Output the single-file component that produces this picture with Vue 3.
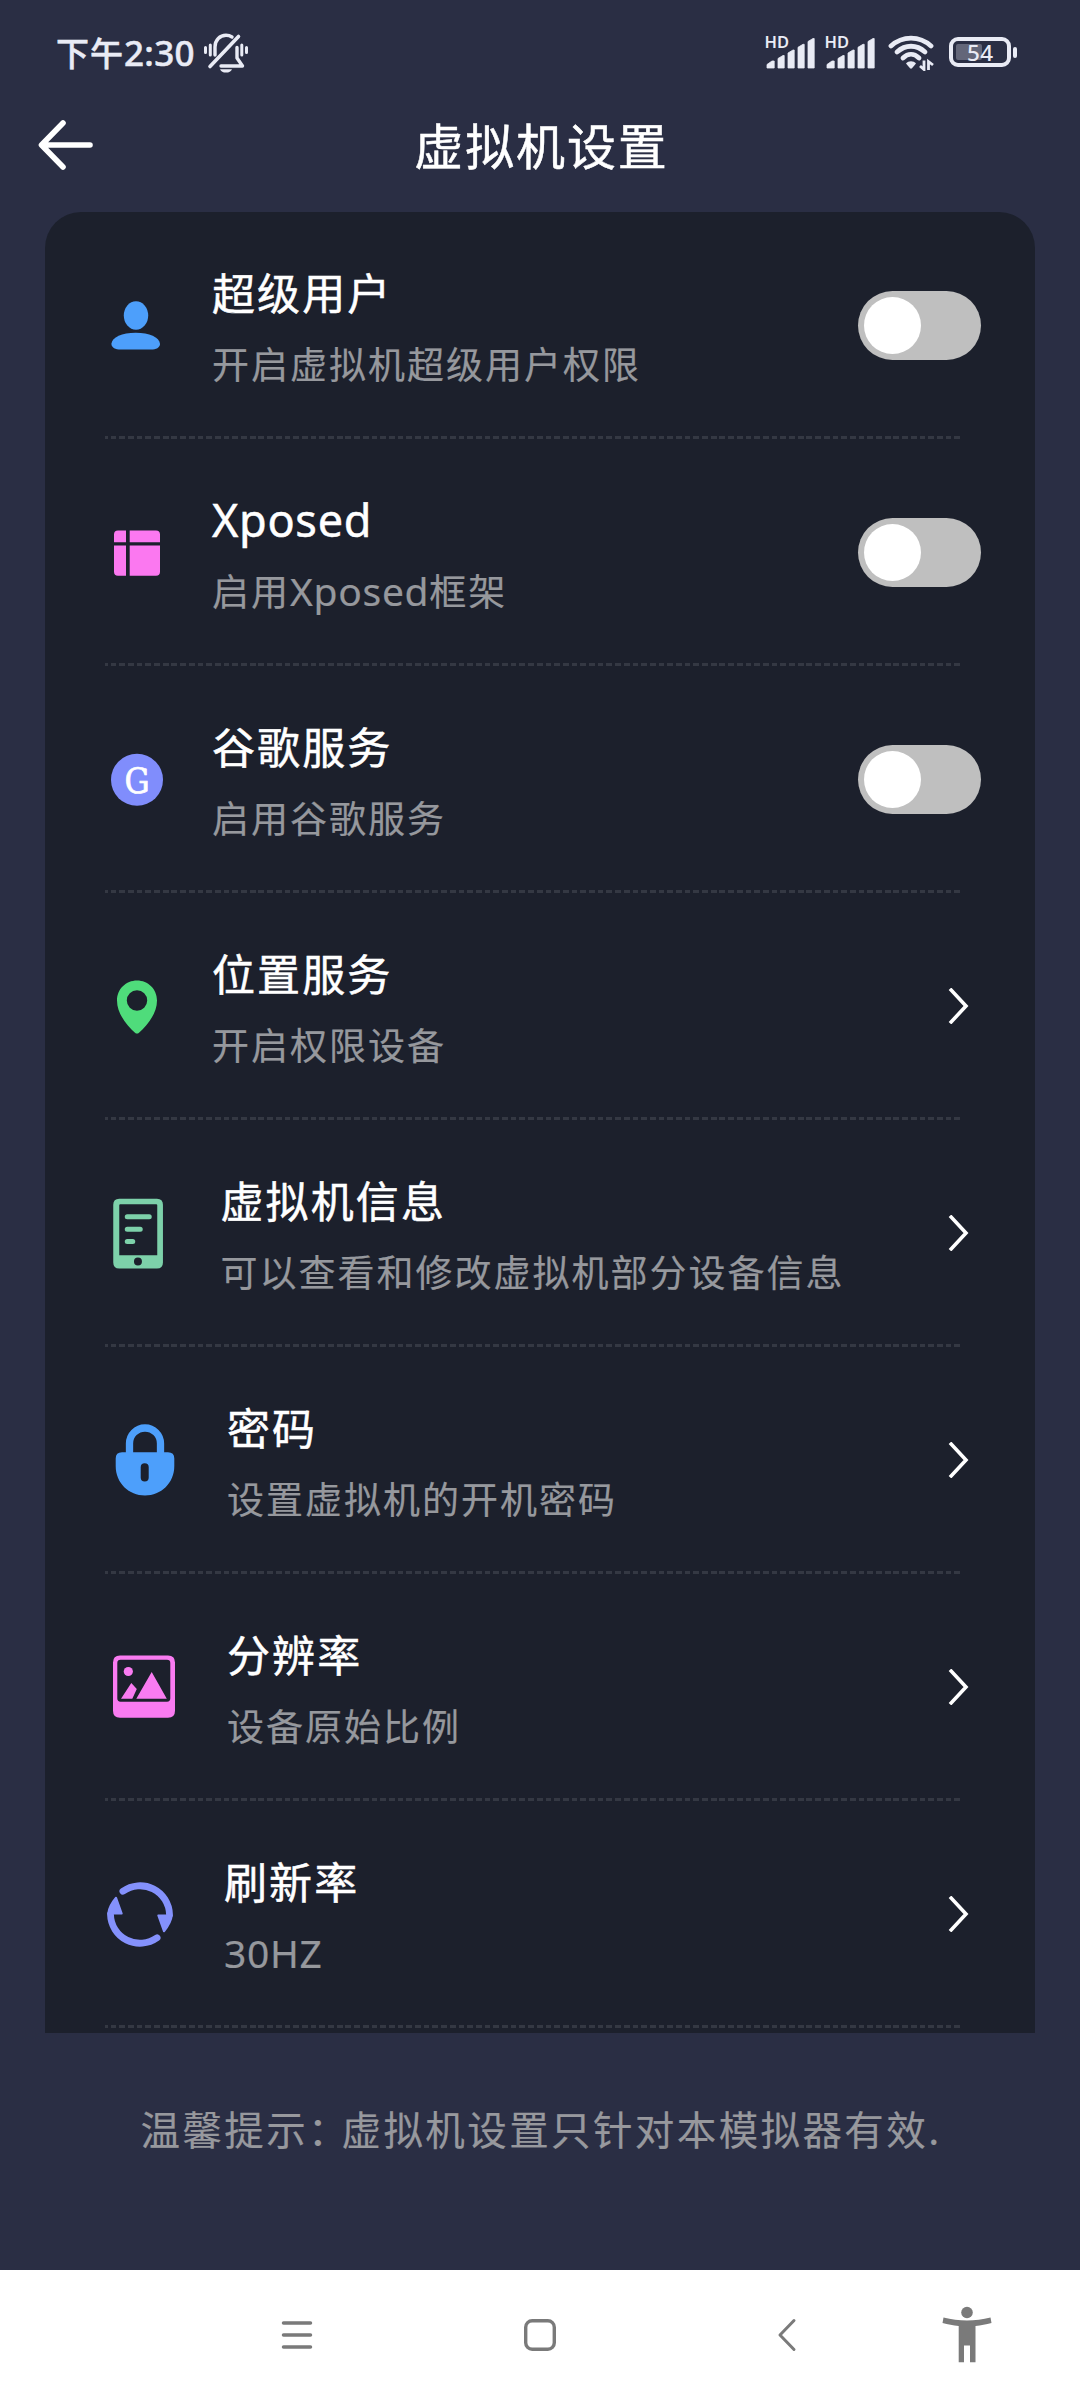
<script setup>
const rows = [
  { icon: 'user', title: '超级用户', desc: '开启虚拟机超级用户权限', control: 'switch' },
  { icon: 'xposed', title: 'Xposed', desc: '启用Xposed框架', control: 'switch' },
  { icon: 'google', title: '谷歌服务', desc: '启用谷歌服务', control: 'switch' },
  { icon: 'location', title: '位置服务', desc: '开启权限设备', control: 'link' },
  { icon: 'device', title: '虚拟机信息', desc: '可以查看和修改虚拟机部分设备信息', control: 'link' },
  { icon: 'lock', title: '密码', desc: '设置虚拟机的开机密码', control: 'link' },
  { icon: 'picture', title: '分辨率', desc: '设备原始比例', control: 'link' },
  { icon: 'refresh', title: '刷新率', desc: '30HZ', control: 'link' },
]

// Latin runs use a slightly larger size than the Chinese glyphs around them
const runs = (text) =>
  text.split(/([A-Za-z0-9]+)/).filter(Boolean).map((t) => ({ t, latin: /^[A-Za-z0-9]/.test(t) }))
</script>

<template>
  <div class="screen">
    <div class="status">
      <div class="clock"><span class="cn">下午</span>2:30</div>
      <svg class="bell" width="46" height="42" viewBox="0 0 46 42" fill="none" stroke="currentColor" stroke-linecap="round" stroke-linejoin="round">
        <path stroke-width="3.400" d="M12 24V16C12 9 17 4.300 23 4.300C25.500 4.300 27.500 5 29 6" />
        <path stroke-width="3.600" d="M35.500 5.500L7 35.500" />
        <path stroke-width="3.400" d="M18 35H39.500L34 27V16.500" />
        <path stroke-width="3" d="M2.500 16.500V21.500M7.300 14V24M38.800 14V24M43.500 16.500V21.500" />
        <path fill="currentColor" stroke="none" d="M17 38.200H29C28 40.400 26 41.600 23 41.600S18 40.400 17 38.200Z" />
      </svg>
      <div class="signals">
        <div v-for="n in 2" :key="n" class="signal">
          <span class="hd">HD</span>
          <svg width="52" height="34" viewBox="0 0 52 34" fill="currentColor">
            <path d="M2 33V29.500L7 26H9.200V33ZM13 33V23.500L18 20.500H19.200V33ZM23 33V18L28 15H29.200V33ZM33 33V12.300L38 9.300H39.200V33ZM43 33V6.500L48 3.500H49.200V33Z" stroke="currentColor" stroke-linejoin="round" stroke-width=".8" />
          </svg>
        </div>
      </div>
      <svg class="wifi" width="48" height="38" viewBox="0 0 48 38" fill="none" stroke="currentColor" stroke-width="4.800" stroke-linecap="round">
        <path d="M3 13C14.500 2.500 31.500 2.500 43 13" />
        <path d="M9 19C17.500 11.300 28.500 11.300 37 19" />
        <path d="M15 25C20 20.100 26 20.100 31 25" />
        <path fill="currentColor" stroke="none" d="M18 30.500C20.500 27.500 25.500 27.500 28 30.500L24 35.300Q23 36.200 22 35.300Z" />
        <path stroke-width="2.800" stroke-linecap="butt" d="M36 27.500V36.500L32 33M40.500 37V28.500L45 32" />
      </svg>
      <div class="battery">
        <div class="cell"><div class="level"></div><span>54</span></div>
        <div class="nub"></div>
      </div>
    </div>

    <header class="head">
      <svg class="back" width="60" height="56" viewBox="0 0 60 56" fill="none" stroke="#fff" stroke-width="5.600" stroke-linecap="round" stroke-linejoin="round">
        <path d="M54 28H6M27 6L5.500 28L27 50" />
      </svg>
      <h1>虚拟机设置</h1>
    </header>

    <main class="card">
      <section v-for="row in rows" :key="row.icon" class="row">
        <svg v-if="row.icon === 'user'" class="icon" viewBox="0 0 107 120" fill="#4d9ffb">
          <ellipse cx="31" cy="49.500" rx="12.200" ry="14.300" />
          <path d="M6.400 77.700C7 71.200 17 66.700 30.700 66.700S54.400 71.200 55 77.700C55 81.700 51 83.500 46 83.500H15.500C10.500 83.500 6.400 81.700 6.400 77.700Z" />
        </svg>
        <svg v-else-if="row.icon === 'xposed'" class="icon" viewBox="0 0 107 120" fill="#fb78f0">
          <path d="M13 37.500H21V49.200H9V41.500Q9 37.500 13 37.500ZM24.700 37.500H51Q55 37.500 55 41.500V49.200H24.700ZM9 52.500H21V82.800H13Q9 82.800 9 78.800ZM24.700 52.500H55V78.800Q55 82.800 51 82.800H24.700Z" />
        </svg>
        <svg v-else-if="row.icon === 'google'" class="icon" viewBox="0 0 107 120">
          <circle cx="32" cy="59.800" r="26" fill="#808dfc" />
          <text x="0" y="0" transform="translate(32 73) scale(.9 1)" text-anchor="middle" class="g">G</text>
        </svg>
        <svg v-else-if="row.icon === 'location'" class="icon" viewBox="0 0 107 120" fill="#4fdc7b">
          <path fill-rule="evenodd" d="M32 33.500C43 33.500 52 42 52 53.500C52 67 41.500 79 34 85.700Q32 87.400 30 85.700C22.500 79 12 67 12 53.500C12 42 21 33.500 32 33.500ZM32 43.300A10.200 10.200 0 1 0 32 63.700A10.200 10.200 0 1 0 32 43.300Z" />
        </svg>
        <svg v-else-if="row.icon === 'device'" class="icon icon-device" viewBox="0 0 115 120">
          <path fill="#7dd1aa" fill-rule="evenodd" d="M14 24.800H51.700Q57.700 24.800 57.700 30.800V88.500Q57.700 94.500 51.700 94.500H14Q8 94.500 8 88.500V30.800Q8 24.800 14 24.800ZM15 30.200Q14 30.200 14 31.200V81.200H52V31.200Q52 30.200 51 30.200ZM32.700 83.500A4 4 0 1 0 32.700 91.500A4 4 0 1 0 32.700 83.500Z" />
          <path stroke="#7dd1aa" stroke-width="5" stroke-linecap="round" d="M22 42.800H44M22 55.200H35M22 67.500H27.500" />
        </svg>
        <svg v-else-if="row.icon === 'lock'" class="icon icon-lock" viewBox="0 0 122 120">
          <path fill="none" stroke="#4d9ffb" stroke-width="7.300" d="M24.500 54V42.500A15.300 15.300 0 0 1 55.500 42.500V54" />
          <path fill="#4d9ffb" fill-rule="evenodd" d="M17 51.200H63Q69.300 51.200 69.300 57.500V65C69.300 82 56 94.500 40 94.500S10.700 82 10.700 65V57.500Q10.700 51.200 17 51.200ZM35.700 66.200V76.500A4 4 0 0 0 43.700 76.500V66.200A4 4 0 0 0 35.700 66.200Z" />
        </svg>
        <svg v-else-if="row.icon === 'picture'" class="icon icon-lock" viewBox="0 0 122 120" fill="#f97bf1">
          <path fill-rule="evenodd" d="M15 27.500H63Q70 27.500 70 34.500V82.800Q70 89.800 63 89.800H15Q8 89.800 8 82.800V34.500Q8 27.500 15 27.500ZM15.500 31.800Q12.300 31.800 12.300 35V70.300Q12.300 73.700 15.500 73.700H62Q65.300 73.700 65.300 70.300V35Q65.300 31.800 62 31.800Z" />
          <circle cx="23.300" cy="43.500" r="4.600" />
          <path d="M46.700 44L61.800 70.700H31.300ZM16 70.700L26.300 55L31.800 61L27.300 70.700Z" />
        </svg>
        <svg v-else class="icon icon-refresh" viewBox="0 0 119 120" fill="none" stroke="#8491fc" stroke-width="6.800" stroke-linecap="round">
          <path d="M17.900 36.200A29.500 29.500 0 0 1 64.500 59.500" />
          <path d="M52.100 82.800A29.500 29.500 0 0 1 5.500 59.500" />
          <path fill="#8491fc" stroke-width="2" stroke-linejoin="round" d="M53.300 60.500H66.800Q66 68 59 76.300ZM16.700 58.500H3.200Q4 51 11 42.700Z" />
        </svg>

        <div class="texts">
          <p class="title"><span v-for="(r, i) in runs(row.title)" :key="i" :class="{ latin: r.latin }">{{ r.t }}</span></p>
          <p class="desc"><span v-for="(r, i) in runs(row.desc)" :key="i" :class="{ latin: r.latin }">{{ r.t }}</span></p>
        </div>

        <div v-if="row.control === 'switch'" class="switch"><div class="knob"></div></div>
        <svg v-else class="chevron" width="24" height="36" viewBox="0 0 24 36" fill="none" stroke="#fff" stroke-width="3.600">
          <path d="M2 .8L18 18L2 35.200" />
        </svg>
      </section>
    </main>

    <p class="tip">温馨提示<span class="colon">：</span>虚拟机设置只针对本模拟器有效<span class="dot">.</span></p>

    <nav class="nav">
      <svg class="n-menu" width="32" height="30" viewBox="0 0 32 30" stroke="#7a7a7a" stroke-width="3.500" stroke-linecap="round">
        <path d="M2.500 3H29.500M2.500 15H29.500M2.500 27H29.500" />
      </svg>
      <svg class="n-home" width="32" height="32" viewBox="0 0 32 32" fill="none" stroke="#7a7a7a" stroke-width="3.400">
        <rect x="1.700" y="1.700" width="28.600" height="28.600" rx="6.500" />
      </svg>
      <svg class="n-back" width="20" height="36" viewBox="0 0 20 36" fill="none" stroke="#7a7a7a" stroke-width="3" stroke-linecap="round" stroke-linejoin="round">
        <path d="M17 3.500L3 18L17 32.500" />
      </svg>
      <svg class="n-person" width="50" height="58" viewBox="0 0 50 58" fill="#7a7a7a">
        <circle cx="25" cy="6.500" r="5.800" />
        <path d="M1.500 11.500C17 15.500 33 15.500 48.500 11.500L49.500 17C44 18.500 39 19.300 33.500 20V56.300H28V39.500H22V56.300H16.700V20C11 19.300 6 18.500 .5 17Z" />
      </svg>
    </nav>
  </div>
</template>

<style>
body {
  margin: 0;
  background: #2a2e44;
}
</style>

<style scoped>
.screen {
  width: 1080px;
  height: 2400px;
  display: flex;
  flex-direction: column;
  background: #2a2e44;
  color: #fff;
  font-family: "Noto Sans CJK SC", "Noto Sans", sans-serif;
  overflow: hidden;
}
h1,
p {
  margin: 0;
  font-weight: 400;
  white-space: nowrap;
}
svg {
  flex: none;
  display: block;
}
.status {
  height: 72px;
  padding: 30px 63px 0 56px;
  box-sizing: border-box;
  display: flex;
  align-items: flex-start;
  color: #e9ebf5;
}
.clock {
  width: 147px;
  padding-top: 1px;
  font: 500 35px/44px "Noto Sans", "Noto Sans CJK SC", sans-serif;
  letter-spacing: 0.300px;
  white-space: nowrap;
  -webkit-text-stroke: 0.500px currentColor;
}
.cn {
  font-size: 33px;
  letter-spacing: 1px;
}
.bell {
  margin-top: 1px;
}
.signals {
  display: flex;
  margin-left: auto;
  gap: 8px;
}
.signal {
  position: relative;
  padding-top: 5px;
}
.hd {
  position: absolute;
  left: -0.500px;
  top: 4px;
  font: 600 16.500px/16px "Noto Sans", sans-serif;
}
.wifi {
  margin: 3px 0 0 11px;
}
.battery {
  display: flex;
  align-items: center;
  gap: 2px;
  margin: 7px 0 0 13px;
}
.cell {
  position: relative;
  width: 62px;
  height: 30px;
  box-sizing: border-box;
  border: 4px solid currentColor;
  border-radius: 9px;
}
.level {
  width: 26px;
  height: 16px;
  margin: 3px 0 0 3px;
  border-radius: 2px;
  background: #636679;
}
.cell span {
  position: absolute;
  left: 14px;
  top: 1px;
  font: 500 22.500px/22px "Noto Sans", sans-serif;
  letter-spacing: 0.500px;
}
.nub {
  width: 4px;
  height: 11px;
  border-radius: 2px;
  background: currentColor;
}
.head {
  height: 140px;
  display: flex;
  align-items: center;
  padding: 6px 36px 0;
  box-sizing: border-box;
}
.back {
  margin-right: -60px;
}
h1 {
  flex: 1;
  padding: 0 0 2px 3px;
  text-align: center;
  font-size: 49px;
  line-height: 70px;
  letter-spacing: 1.900px;
  -webkit-text-stroke: 0.500px currentColor;
}
.card {
  width: 990px;
  height: 1821px;
  margin: 0 45px;
  flex: none;
  border-radius: 36px 36px 0 0;
  background: #1c202c;
}
.row {
  height: 227px;
  box-sizing: border-box;
  padding: 0 54px 0 60px;
  display: flex;
  align-items: center;
  background: repeating-linear-gradient(90deg, #343843 0 2.600px, transparent 2.600px 5.500px, #343843 5.500px 8.700px) 60px 224px / 855px 3px no-repeat;
}
.icon {
  width: 107px;
  height: 120px;
}
.icon-device {
  width: 115.500px;
}
.icon-lock {
  width: 122px;
}
.icon-refresh {
  width: 119px;
}
.g {
  font: 35px "DejaVu Serif", serif;
  fill: #fff;
  stroke: #fff;
  stroke-width: 0.700px;
}
.texts {
  flex: 1;
  padding-bottom: 3px;
}
.title {
  font-size: 43px;
  line-height: 60px;
  letter-spacing: 2.100px;
  -webkit-text-stroke: 0.500px currentColor;
}
.desc {
  margin-top: 17px;
  font-size: 37px;
  line-height: 50px;
  letter-spacing: 2px;
  color: #96989d;
  -webkit-text-stroke: 0.200px currentColor;
}
.latin {
  font-family: "Noto Sans", sans-serif;
  line-height: 1;
  letter-spacing: 0.700px;
}
.title .latin {
  font-size: 45px;
}
.desc .latin {
  font-size: 39px;
}
.switch {
  width: 123px;
  height: 69px;
  box-sizing: border-box;
  padding: 6px;
  border-radius: 35px;
  background: #bfbfbf;
}
.knob {
  width: 57px;
  height: 57px;
  border-radius: 50%;
  background: #fff;
}
.chevron {
  margin: 0 9px 1px 0;
}
.tip {
  height: 237px;
  padding: 65px 0 0 2px;
  box-sizing: border-box;
  text-align: center;
  font-size: 39.500px;
  line-height: 60px;
  letter-spacing: 2.400px;
  color: #97989d;
  -webkit-text-stroke: 0.200px currentColor;
}
.colon {
  letter-spacing: -6px;
}
.nav {
  flex: 1;
  display: flex;
  align-items: center;
  background: #fff;
}
.n-menu {
  margin-left: 281px;
}
.n-home {
  margin-left: 211px;
}
.n-back {
  margin-left: 221px;
}
.n-person {
  margin-left: 145px;
}
</style>
